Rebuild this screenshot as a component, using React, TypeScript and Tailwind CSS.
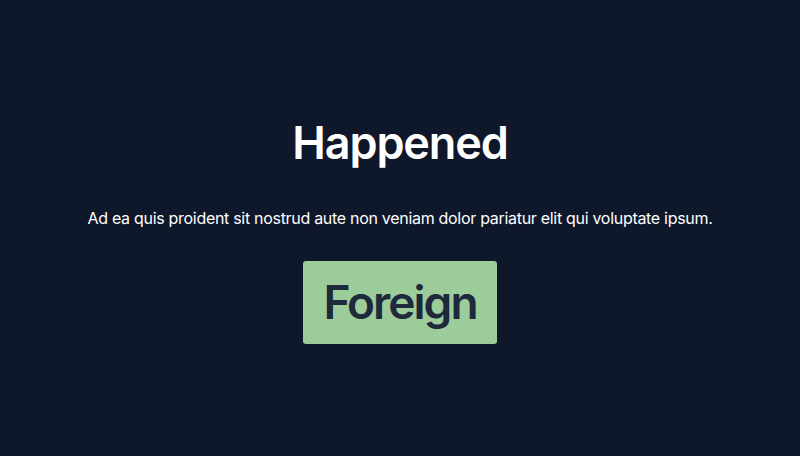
export default function App() {
  return (
    <div className="flex min-h-[456px] w-full flex-col items-center justify-center bg-[#0f172a] pt-[7px] font-['Inter','Liberation_Sans',sans-serif]">
      <h1 className="text-[45px] font-semibold leading-none tracking-tight text-white">Happened</h1>
      <p className="mt-[41px] text-base tracking-[-0.3px] text-white">
        Ad ea quis proident sit nostrud aute non veniam dolor pariatur elit qui voluptate ipsum.
      </p>
      <button className="mt-[31px] flex h-[83px] items-center rounded-[3px] bg-[#9ccc9a] px-5 text-[46px] font-semibold leading-none tracking-[-0.043em] text-[#1e293b]">
        Foreign
      </button>
    </div>
  );
}
